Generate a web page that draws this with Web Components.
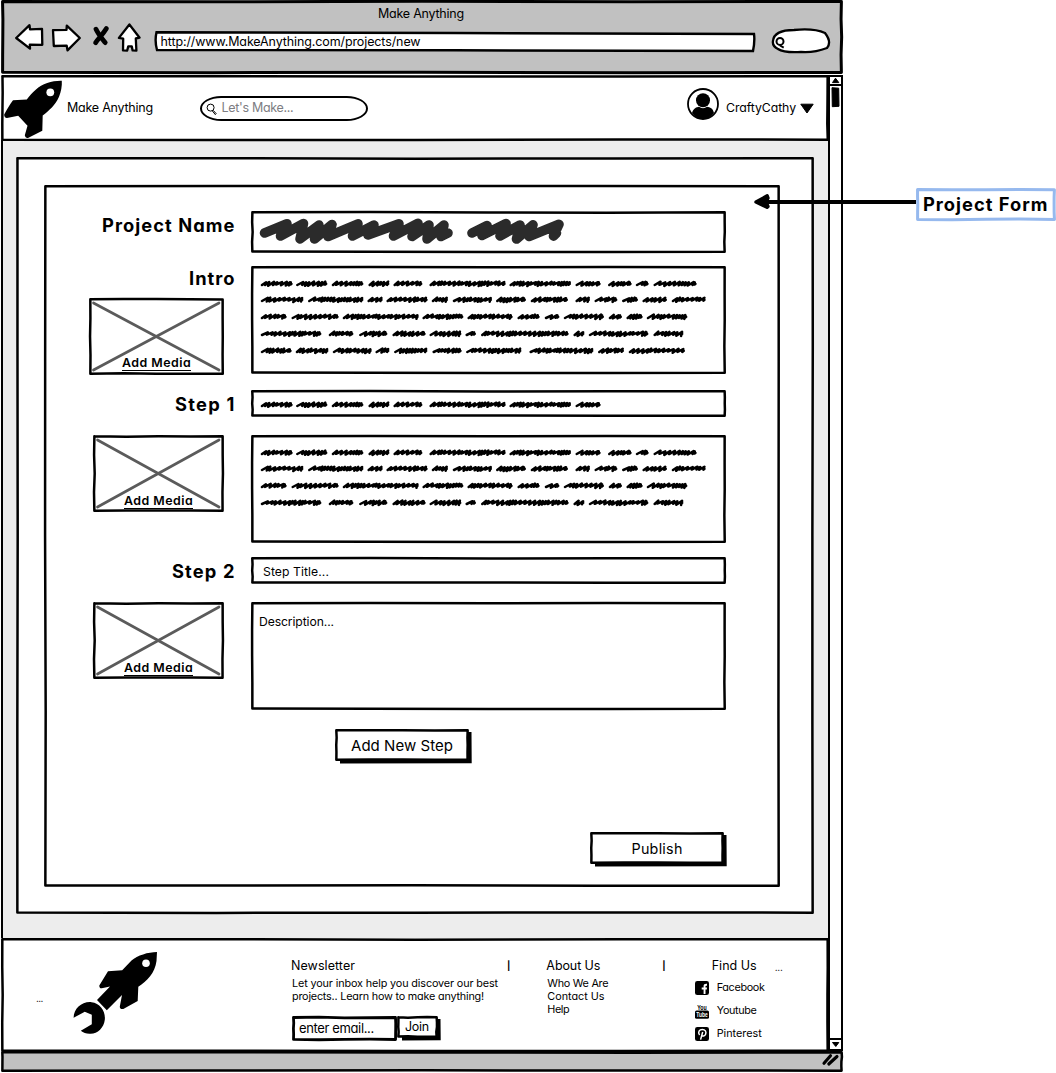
<!DOCTYPE html>
<html lang="en">
<head>
<meta charset="utf-8">
<title>Make Anything</title>
<style>body{margin:0;background:#fff}</style>
</head>
<body>
<project-wireframe></project-wireframe>
<script>
function random(seed){let s=seed*7919+13;return()=>{s=(s*16807)%2147483647;return s/2147483647}}

/* One line of text, tracked out to the width in "w". */
class SkText extends HTMLElement{
  constructor(){super();this.attachShadow({mode:'open'}).innerHTML=
    '<style>:host{display:block;white-space:nowrap;flex:none;line-height:14px;color:#000}span{display:inline-block}</style><span><slot></slot></span>'}
  connectedCallback(){
    this.style.fontSize=(this.getAttribute('size')||12.5)+'px';
    const w=+this.getAttribute('w');
    if(!w)return;
    const span=this.shadowRoot.querySelector('span');
    const n=this.textContent.length;
    span.style.letterSpacing=((w-span.getBoundingClientRect().width)/(n-0.5)).toFixed(3)+'px';
    this.style.width=w+'px';
  }
}
customElements.define('sk-text',SkText);

/* Hand-drawn box: w, h, stroke width, ink and fill. */
class SkBox extends HTMLElement{
  constructor(){super();this.attachShadow({mode:'open'})}
  connectedCallback(){
    const a=(k,d)=>this.getAttribute(k)||d;
    const w=+a('w'),h=+a('h'),sw=+a('stroke',2.5),ink=a('ink','#000'),fill=a('fill','#fff'),r=random(w+h);
    const j=()=>((r()-0.5)*0.9);
    const i=sw/2+.1,x2=w-i,y2=h-i,p=[];
    const side=(x1,y1,xe,ye)=>{for(let k=1;k<=4;k++){const t=k/4,H=y1===ye;
      const e=k===4?0.3:.8;p.push('L'+(x1+(xe-x1)*t+(H?0:j()*e)).toFixed(2)+' '+(y1+(ye-y1)*t+(H?j()*e:0)).toFixed(2))}};
    side(i,i,x2,i);side(x2,i,x2,y2);side(x2,y2,i,y2);side(i,y2,i,i);
    const shadow=this.hasAttribute('shadow')?`<path d="M5 ${h+.7}L${w+.9} ${h+.5}L${w+.7} 3" fill="none" stroke="#000" stroke-width="3.6"/>`:'';
    this.shadowRoot.innerHTML=`<style>
      :host{display:block;position:relative;box-sizing:border-box;flex:none;width:${w}px;height:${h}px}
      svg{position:absolute;inset:0;overflow:visible;z-index:-1}
      :host{isolation:isolate}</style>
      <svg width="${w}" height="${h}">${shadow}<path d="M${i} ${i}${p.join('')}Z" fill="${fill}" stroke="${ink}" stroke-width="${sw}" stroke-linejoin="round"/></svg><slot></slot>`;
  }
}
customElements.define('sk-box',SkBox);

/* Scribbled line of placeholder words, given as start-end pairs in thirds of a pixel. */
class SkScribble extends HTMLElement{
  constructor(){super();this.attachShadow({mode:'open'})}
  connectedCallback(){
    let d='';
    this.getAttribute('words').split(' ').forEach((pair,n)=>{
      let [a,b]=pair.split('-').map(v=>(+v-62)/3);
      const r=random(Math.round(a*3+b*7)+n+3);
      let x=a+1;const end=b-1.6;
      d+=`M${x.toFixed(1)} 7`;
      while(x<end-3.6){
        const wide=r()>.5,step=wide?5.2:2.9+r()*.8,top=3.6+r()*.8;
        const px=Math.min(x+step+.6,end);
        d+=`L${px.toFixed(1)} ${top.toFixed(1)}L${(px-1).toFixed(1)} ${(6.5+r()*1.5).toFixed(1)}`;
        x=px-1;
      }
      d+=`L${(end-.6).toFixed(1)} 4.4L${(end-.8).toFixed(1)} 6.6L${end.toFixed(1)} 5.9`;
    });
    this.shadowRoot.innerHTML=`<style>:host{display:block;height:11px;flex:none}svg{display:block;overflow:visible}</style>
      <svg width="455" height="11"><path d="${d}" fill="none" stroke="#000" stroke-width="2.5" stroke-linecap="round" stroke-linejoin="round"/></svg>`;
  }
}
customElements.define('sk-scribble',SkScribble);

/* Media placeholder with crossed diagonals. */
class SkMedia extends HTMLElement{
  constructor(){super();this.attachShadow({mode:'open'})}
  connectedCallback(){
    const w=+this.getAttribute('w'),h=77;
    this.shadowRoot.innerHTML=`<style>:host{display:block;flex:none}
      .in{display:flex;flex-direction:column;justify-content:flex-end;align-items:center;height:100%;box-sizing:border-box;padding:0 0 3.5px 0;position:relative}
      svg{position:absolute;left:0;top:0}
      sk-text{position:relative;font-weight:600;border-bottom:1.3px solid #000;line-height:14px;height:14px}</style>
      <sk-box w="${w}" h="${h}"><div class="in">
      <svg width="${w}" height="${h}"><path d="M4.5 5L${w-5} ${h-5}M${w-5} 5L4.5 ${h-5}" stroke="#5b5b5b" stroke-width="2.7" stroke-linecap="round"/></svg>
      <sk-text w="69" size="12.4">Add Media</sk-text></div></sk-box>`;
  }
}
customElements.define('sk-media',SkMedia);

/* Push button with a heavy drop edge. */
class SkButton extends HTMLElement{
  constructor(){super();this.attachShadow({mode:'open'})}
  connectedCallback(){
    const a=k=>this.getAttribute(k);
    this.shadowRoot.innerHTML=`<style>:host{display:block;flex:none}div{height:100%;display:flex;align-items:center;justify-content:center;box-sizing:border-box;padding-top:1px}</style>
    <sk-box w="${a('w')}" h="${a('h')}" shadow><div><sk-text w="${a('tw')}" size="${a('size')}">${this.textContent}</sk-text></div></sk-box>`;
  }
}
customElements.define('sk-button',SkButton);

const ICONS={
  nav:[127,30,`<g fill="#fff" stroke="#000" stroke-width="2.3" stroke-linejoin="round"><path d="M1.2 14L14.5 1.2L15 5.3L27 4.8L27.3 20.8L14.8 20.6L15 24.6Z"/><path d="M38 6.2L51.5 5.9L51.8 1.6L64.8 14L52.5 26.4L51.7 21.7L38.8 22Z"/><path d="M103.9 13.9L114.4 .5L124.6 13.7L120.8 14.5L121.4 26.6L117.6 26.4L116.8 22.4L113.2 22.4L112.2 26.6L108 26.4L108.2 14.7Z"/></g><path d="M81 5.2C83 10 86.5 14 90.2 18.6M91.4 4.6C87.5 11 83.5 14 80.6 18.8" fill="none" stroke="#000" stroke-width="4.8" stroke-linecap="round"/>`],
  rocket:[58,59,`<path d="M57.8.8C49 .5 38 3.5 32 9.5C28 13 25.3 16.2 22.8 19.4L9 20.3C6 24.5 2.5 30 .2 34.5C0 36.5 1.5 38.2 3 38L14.2 35.8L23.5 45.8L20.8 55.3C21 57 22.5 58.5 24 58L38.3 50.8L38.7 35.5C45 30.5 51.5 25 55 16.7C57 12 58.2 6 57.8.8Z"/><circle cx="46.3" cy="12.3" r="3.9" fill="#fff"/>`],
  wrench:[85,84,`<path d="M84 1C75 1 64.5 4.5 58.5 9.5L49.2 19.2L35 20.3L26.3 34.5C26.3 36.5 27 37.5 28.8 37.3L37 35.5L24 49L33.8 59.2L49 44L46.8 55.5C46.8 57.5 48 58.3 50.3 58L64.7 50L65.3 35.7C74 30 82 22 83.5 10Z"/><circle cx="73" cy="12.2" r="3.8" fill="#fff"/><path d="M.6 66.8C.8 57.5 9 50.3 18.5 51.2C27 52 32.7 60 31.8 68.8C31 77 24 83.5 16.5 82.8C13 82.7 10.3 81.8 7.8 79.8L18.8 73.3V63.8L11.8 60.7Z"/>`],
  lens:[12,13,`<circle cx="4.6" cy="4.6" r="3.5" fill="#fff" stroke="#000" stroke-width="1"/><path d="M6.4 8L9.3 11.6L10.2 10.7L7.3 7.4" fill="none" stroke="#000" stroke-width="1"/>`],
  user:[32,32,`<circle cx="16" cy="16" r="15" fill="#fff" stroke="#000" stroke-width="1.8"/><circle cx="16" cy="12.3" r="7"/><path d="M5 25C6.5 20 9.5 19.2 12 18.8C14.5 20.7 17.5 20.7 20 18.8C23 19.3 26 20.4 27 25C21 33 11 33 5 25Z"/>`],
  caret:[14,11,`<path d="M.8 1.2H13.2L7 10Z" stroke="#000" stroke-linejoin="round"/>`],
  facebook:[14,14,`<rect width="14" height="14" rx="2.3"/><path d="M8.6 13V8.5H6.7V6.5H8.6V5C8.6 3.3 9.8 2.6 12 2.8V4.7C10.8 4.6 10.5 4.9 10.5 5.7V6.5H12L11.8 8.5H10.5V13" fill="#fff"/>`],
  youtube:[14,16,`<g font-family="Liberation Sans" font-weight="bold"><text x="2.2" y="6.8" font-size="7.6" textLength="9.5" lengthAdjust="spacingAndGlyphs">You</text><rect x="0" y="7.4" width="14" height="8.4" rx="1.6"/><text x="1.3" y="14.3" font-size="7" fill="#fff" textLength="11.4" lengthAdjust="spacingAndGlyphs">Tube</text></g>`],
  pinterest:[14,14,`<rect width="14" height="14" rx="2.3"/><path d="M4.6 8C2.4 5.2 4.4 2.4 7.3 2.4C10.2 2.4 11.6 4.7 10.6 7.2C9.7 9.5 7.2 9.4 6.7 8.2M7.7 5L5.6 12.6" stroke="#fff" stroke-width="1.5" fill="none"/>`],
  grip:[17,14,`<path d="M2 10.3L8.5 2.7M6.8 11L15 3.5" stroke="#000" stroke-width="3.1" stroke-linecap="round"/>`],
  title:[302,28,`<g fill="none" stroke="#2b2b2b" stroke-width="9.6" stroke-linecap="round" stroke-linejoin="round"><path d="M3.5 14L26 4.8L19.5 17L42.5 4.5L39 20L58 6L53.5 20L71 5.5L67 17.5L97 4.8L91.5 17L113 6L107 16L138 4.8L132.5 17L157 4.3L151 17.5L168 6L166 20L183 6L180 17.5L187 14"/><path d="M211 14L226 6.5L221 16.5L245 4.5L239 17L259 6L255.5 20L272 5.8L268 17.5L298 5.3L292.5 17L295.5 14"/></g>`]
};
class SkIcon extends HTMLElement{
  constructor(){super();this.attachShadow({mode:'open'})}
  connectedCallback(){const [w,h,s]=ICONS[this.getAttribute('name')];
    this.shadowRoot.innerHTML=`<style>:host{display:block;flex:none;width:${w}px;height:${h}px}svg{display:block;overflow:visible}</style><svg width="${w}" height="${h}">${s}</svg>`}
}
customElements.define('sk-icon',SkIcon);

/* Browser toolbar. */
class BrowserChrome extends HTMLElement{
  constructor(){super();this.attachShadow({mode:'open'}).innerHTML=`<style>
    :host{display:block;height:76px;flex:none}
    .col{display:flex;flex-direction:column;height:100%}
    .title{padding:7px 0 0 377px}
    .row{display:flex;align-items:flex-start;padding-left:14px}
    .url{margin:9.5px 0 0 11.5px}.find{margin:6.5px 0 0 15px}
  </style><sk-box w="842" h="74" fill="#c1c1c1" stroke="3"><div class="col">
    <div class="title"><sk-text w="86">Make Anything</sk-text></div>
    <div class="row"><sk-icon name="nav" style="margin-top:3px"></sk-icon>
      <svg class="url" width="602" height="22"><path d="M2.5 1.3L300 2L600 3Q601 10 599 20L300 19.3L3 19Q.5 10 2.5 1.3Z" fill="#fff" stroke="#000" stroke-width="2.4"/><foreignObject x="6.5" y="3.5" width="280" height="16"><sk-text w="260" style="line-height:14px">http://www.MakeAnything.com/projects/new</sk-text></foreignObject></svg>
      <svg class="find" width="60" height="26"><path d="M2 13Q3 2 23 2Q43 0 54 5Q61 14 56 20Q43 25 30 24Q13 25 7 21Q1 18 2 13Z" fill="#fff" stroke="#000" stroke-width="2.3"/><circle cx="9" cy="13.4" r="3.5" fill="none" stroke="#000" stroke-width="2"/><path d="M9 17.5L12.7 19.7" stroke="#000" stroke-width="2"/></svg>
    </div></div></sk-box>`}
}
customElements.define('browser-chrome',BrowserChrome);

/* Site header. */
class SiteHeader extends HTMLElement{
  constructor(){super();this.attachShadow({mode:'open'}).innerHTML=`<style>
    :host{display:block}.row{display:flex;align-items:flex-start;padding:5px 0 0 2.5px}
    .search{display:flex;align-items:flex-start;width:168px;height:25px;box-sizing:border-box;border:2px solid #000;border-radius:22px / 13px;margin:16px 0 0 46.5px;padding:3px 0 0 4.5px;background:#fff}
    .search sk-text{color:#7d7d82;margin:0 0 0 3.5px}
  </style><sk-box w="828" h="66"><div class="row">
    <sk-icon name="rocket"></sk-icon><sk-text w="86" style="margin:21px 0 0 5.5px">Make Anything</sk-text>
    <div class="search"><sk-icon name="lens" style="margin-top:2px"></sk-icon><sk-text w="72">Let's Make...</sk-text></div>
    <sk-icon name="user" style="margin:8px 0 0 319.5px"></sk-icon>
    <sk-text w="70" style="margin:21px 0 0 7px" size="12.3">CraftyCathy</sk-text>
    <sk-icon name="caret" style="margin:23px 0 0 4px"></sk-icon>
  </div></sk-box>`}
}
customElements.define('site-header',SiteHeader);

const LINES=['62-158 168-262 275-370 385-448 460-547 568-797 808-993 1006-1082 1104-1175 1187-1226 1240-1370',
'62-190 204-370 382-428 439-563 575-624 638-756 768-858 872-984 1006-1050 1063-1132 1146-1194 1207-1281 1295-1397',
'62-140 154-296 308-536 547-670 682-818 832-899 914-958 971-1092 1106-1146 1159-1208 1220-1342',
'62-244 266-340 357-442 457-557 568-664 676-708 723-986 1000-1033 1046-1225 1240-1330',
'62-155 167-265 278-395 406-448 462-562 577-665 678-844 868-1060 1074-1152 1166-1335'];
const lines=n=>'<div class="lines">'+LINES.slice(0,n).map(l=>`<sk-scribble words="${l}"></sk-scribble>`).join('')+'</div>';

/* Project form. */
class ProjectForm extends HTMLElement{
  constructor(){super();this.attachShadow({mode:'open'}).innerHTML=`<style>
    :host{display:block}
    .outer{padding:28px 0 0 28px}
    .form{display:flex;flex-direction:column;padding:26px 0 0 45px}
    .r{display:flex;align-items:flex-start}
    .l{width:147px;padding-right:15px;box-sizing:content-box;display:flex;flex-direction:column;align-items:flex-end;flex:none}
    .l sk-text{font-weight:700;line-height:22px;margin-right:1px}
    .lines{display:flex;flex-direction:column;gap:5.8px;padding:11.5px 0 0 10px}
  </style><sk-box w="798" h="757"><div class="outer"><sk-box w="736" h="702"><div class="form">
    <div class="r" style="height:55px"><div class="l" style="padding-top:3px"><sk-text w="133" size="18.3">Project Name</sk-text></div><sk-box w="475" h="42"><sk-icon name="title" style="padding:8px 0 0 10px"></sk-icon></sk-box></div>
    <div class="r" style="height:124px"><div class="l" style="padding-top:1px"><sk-text w="46" size="18.3">Intro</sk-text><sk-media w="135" style="align-self:flex-start;margin-top:8.5px"></sk-media></div><sk-box w="475" h="108">${lines(5)}</sk-box></div>
    <div class="r" style="height:45px"><div class="l" style="padding-top:3px"><sk-text w="60" size="18.3">Step 1</sk-text></div><sk-box w="475" h="27"><div class="lines" style="padding-top:8.5px"><sk-scribble words="${LINES[0].split(' ').slice(0,8).join(' ')}"></sk-scribble></div></sk-box></div>
    <div class="r" style="height:122px"><div class="l"><sk-media w="131" style="align-self:flex-start;margin-left:4px"></sk-media></div><sk-box w="475" h="108">${lines(4)}</sk-box></div>
    <div class="r" style="height:45px"><div class="l" style="padding-top:3px"><sk-text w="63" size="18.3">Step 2</sk-text></div><sk-box w="475" h="27"><sk-text w="66" size="12.2" style="padding:7.5px 0 0 12px">Step Title...</sk-text></sk-box></div>
    <div class="r" style="height:127px"><div class="l"><sk-media w="131" style="align-self:flex-start;margin-left:4px"></sk-media></div><sk-box w="475" h="108"><sk-text w="75" size="12.2" style="padding:12.5px 0 0 8px">Description...</sk-text></sk-box></div>
    <sk-button w="134" h="32" tw="102" size="15" style="margin:0 0 71px 246px">Add New Step</sk-button>
    <sk-button w="134" h="32" tw="51" size="14.3" style="margin-left:501px">Publish</sk-button>
  </div></sk-box></div></sk-box>`}
}
customElements.define('project-form',ProjectForm);

/* Site footer. */
class SiteFooter extends HTMLElement{
  constructor(){super();this.attachShadow({mode:'open'}).innerHTML=`<style>
    :host{display:block}.row{display:flex;align-items:flex-start;padding:14px 0 0 35px}
    .c{display:flex;flex-direction:column;flex:none;padding-top:7px}
    .bar{font-weight:700}
    .r{display:flex;align-items:center;height:23px;gap:8px}
  </style><sk-box w="828" h="114"><div class="row">
    <sk-text w="7" size="10" style="margin-top:39px">...</sk-text>
    <sk-icon name="wrench" style="margin-left:30px;margin-top:-1.5px"></sk-icon>
    <div class="c" style="width:214px;margin-left:133px"><sk-text w="64">Newsletter</sk-text>
      <sk-text w="206" size="10.8" style="margin:4px 0 0 1px;line-height:13px">Let your inbox help you discover our best</sk-text>
      <sk-text w="192" size="10.8" style="margin-left:1px;line-height:13px">projects.. Learn how to make anything!</sk-text>
      <div class="r" style="gap:0;align-items:flex-start;margin:12.5px 0 0 1px"><sk-box w="105" h="25" stroke="2.8"><sk-text w="75" size="13" style="padding:5px 0 0 7px">enter email...</sk-text></sk-box><sk-button w="41" h="22" tw="24" size="12.5" style="margin-left:-.5px">Join</sk-button></div></div>
    <sk-text class="bar" size="9" style="margin:7px 0 0 2px">|</sk-text>
    <div class="c" style="width:113px;margin-left:36px"><sk-text w="54">About Us</sk-text>
      <sk-text w="61" size="10.8" style="margin:4px 0 0 1px;line-height:13px">Who We Are</sk-text><sk-text w="57" size="10.8" style="margin-left:1px;line-height:13px">Contact Us</sk-text><sk-text w="22" size="10.8" style="margin-left:1px;line-height:13px">Help</sk-text></div>
    <sk-text class="bar" size="9" style="margin:7px 0 0 3px">|</sk-text>
    <div class="c" style="margin-left:29px"><div class="r" style="gap:18px;height:14px;padding-left:17px"><sk-text w="45">Find Us</sk-text><sk-text w="8" size="10" style="padding-top:1px">...</sk-text></div>
      <div class="r" style="margin-top:3px"><sk-icon name="facebook"></sk-icon><sk-text w="48" size="10.8">Facebook</sk-text></div>
      <div class="r"><sk-icon name="youtube"></sk-icon><sk-text w="40" size="10.8">Youtube</sk-text></div>
      <div class="r"><sk-icon name="pinterest"></sk-icon><sk-text w="45" size="10.8">Pinterest</sk-text></div></div>
  </div></sk-box>`}
}
customElements.define('site-footer',SiteFooter);

/* Vertical scrollbar. */
class ScrollBar extends HTMLElement{
  constructor(){super();this.attachShadow({mode:'open'}).innerHTML=`<style>
   :host{display:flex;flex-direction:column;width:15px;height:976px;box-sizing:border-box;border:2px solid #000;background:#fff;align-items:center;justify-content:space-between}
   svg{display:block}</style>
   <svg width="11" height="34"><path d="M2.5 5.6L5.5 1.2L8.8 5.6Z" stroke="#000"/><path d="M0 8H11" stroke="#000" stroke-width="2"/><path d="M2 10.7L8.7 11.2L9 29.3L2.3 29.7Z" stroke="#000" stroke-linejoin="round"/></svg>
   <svg width="11" height="11"><path d="M0 1H11" stroke="#000" stroke-width="2"/><path d="M2.5 4.5L8.8 4.5L5.8 8.5Z" stroke="#000"/></svg>`}
}
customElements.define('scroll-bar',ScrollBar);

/* Callout label with its arrow. */
class CalloutNote extends HTMLElement{
  constructor(){super();this.attachShadow({mode:'open'}).innerHTML=`<style>
   :host{display:flex;align-items:flex-start;position:absolute;left:753px;top:188px}
   svg{display:block;flex:none}sk-text{font-weight:700}</style>
   <svg width="163" height="30"><path d="M6 14H163" stroke="#000" stroke-width="3.8" stroke-linecap="round"/><path d="M3 14L14.2 7.8L15 10L13 14L15 18.5L14 19.3Z" stroke="#000" stroke-width="3.4" stroke-linejoin="round"/></svg>
   <sk-box w="140" h="33" stroke="3" ink="#96b9ee"><sk-text w="125" size="18.3" style="padding:9px 0 0 7px">Project Form</sk-text></sk-box>`}
}
customElements.define('callout-note',CalloutNote);

class ProjectWireframe extends HTMLElement{
  constructor(){super();this.attachShadow({mode:'open'}).innerHTML=`<style>
   :host{display:block;position:relative;width:1056px;height:1073px;overflow:hidden;background:#fff;font-family:Inter,Lato,sans-serif;font-weight:420;font-feature-settings:"cv11" 1,"calt" 0;color:#000}
   .win{width:843px;display:flex;flex-direction:column;padding-left:1px}
   .body{display:flex;height:976px}
   .page{width:826.5px;flex:none;display:flex;flex-direction:column}
   .main{height:798px;box-sizing:border-box;background:#ededed;border-left:2px solid #000;padding:17px 0 0 13px;flex:none}
   sk-box .grip{display:flex;justify-content:flex-end;padding:2px 4px 0 0}
   browser-chrome{height:75px}
   site-header{height:65px;flex:none}
   site-header,site-footer{position:relative}
  </style><div class="win"><browser-chrome></browser-chrome>
   <div class="body"><div class="page"><site-header></site-header><div class="main"><project-form></project-form></div><site-footer></site-footer></div><scroll-bar></scroll-bar></div>
   <sk-box w="842" h="21" fill="#c1c1c1"><div class="grip"><sk-icon name="grip"></sk-icon></div></sk-box></div>
   <callout-note></callout-note>`}
}
customElements.define('project-wireframe',ProjectWireframe);
</script>
</body>
</html>
